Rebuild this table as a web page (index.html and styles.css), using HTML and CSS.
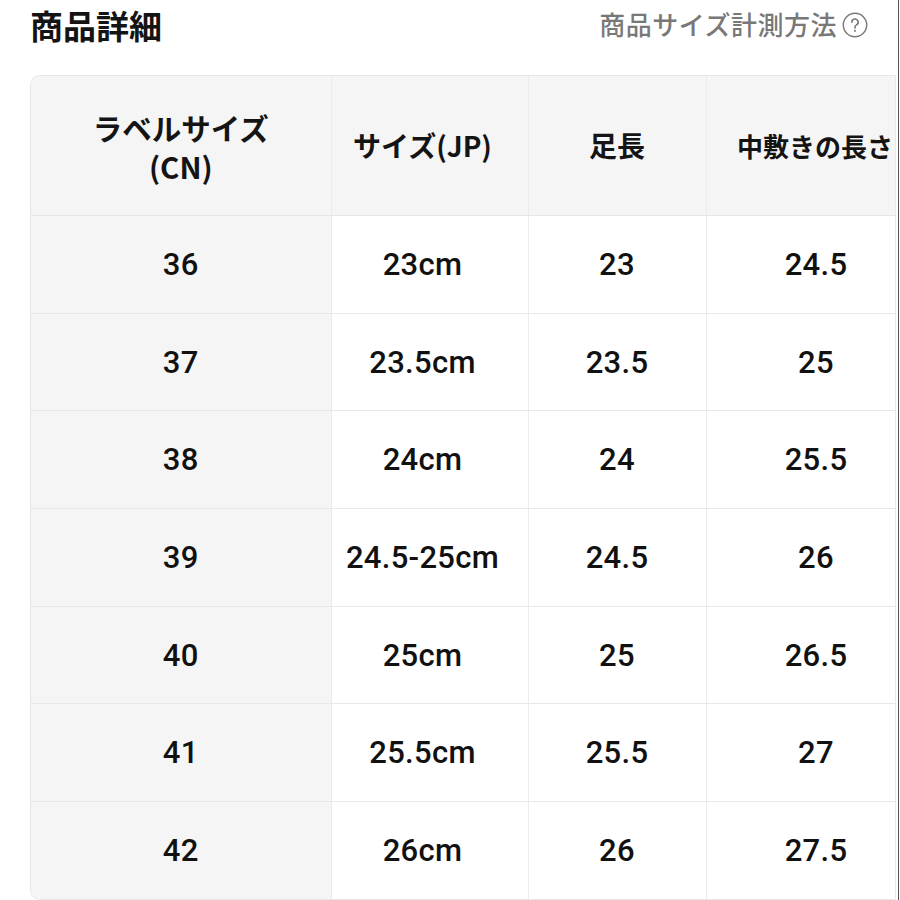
FILE: index.html
```html
<!DOCTYPE html>
<html lang="ja">
<head>
<meta charset="utf-8">
<title>商品詳細</title>
<link rel="stylesheet" href="styles.css">
</head>
<body>
<div class="page">
  <div class="head">
    <h1 class="title">商品詳細</h1>
    <div class="guide">
      <span class="guide-text">商品サイズ計測方法</span>
      <svg class="help" viewBox="0 0 24 24" width="26" height="26" aria-hidden="true">
        <circle cx="12" cy="12" r="10.8" fill="none" stroke="#777" stroke-width="1.3"/>
        <path d="M9.1 9.4a2.9 2.9 0 1 1 4.3 2.5c-.9.5-1.4 1.1-1.4 2v.9" fill="none" stroke="#777" stroke-width="1.5" stroke-linecap="round"/>
        <circle cx="12" cy="17.4" r="0.95" fill="#777"/>
      </svg>
    </div>
  </div>
  <div class="table-wrap">
    <table class="size-table">
      <colgroup>
        <col class="c1"><col class="c2"><col class="c3"><col class="c4">
      </colgroup>
      <thead>
        <tr>
          <th class="h-label">ラベルサイズ<br>(CN)</th>
          <th class="h-jp">サイズ(JP)</th>
          <th>足長</th>
          <th class="h-insole">中敷きの長さ</th>
        </tr>
      </thead>
      <tbody>
        <tr><td>36</td><td>23cm</td><td>23</td><td>24.5</td></tr>
        <tr><td>37</td><td>23.5cm</td><td>23.5</td><td>25</td></tr>
        <tr><td>38</td><td>24cm</td><td>24</td><td>25.5</td></tr>
        <tr><td>39</td><td>24.5-25cm</td><td>24.5</td><td>26</td></tr>
        <tr><td>40</td><td>25cm</td><td>25</td><td>26.5</td></tr>
        <tr><td>41</td><td>25.5cm</td><td>25.5</td><td>27</td></tr>
        <tr><td>42</td><td>26cm</td><td>26</td><td>27.5</td></tr>
      </tbody>
    </table>
  </div>
</div>
</body>
</html>
```
FILE: styles.css
```css
html, body {
  margin: 0;
  padding: 0;
  background: #fff;
}
body {
  font-family: Roboto, "Liberation Sans", "Noto Sans CJK JP", sans-serif;
  color: #141414;
  overflow: hidden;
}
.page {
  width: 899px;
  height: 900px;
  border-right: 1px solid #555;
  padding-left: 30px;
  box-sizing: border-box;
  overflow: hidden;
}
.head {
  height: 50px;
  display: flex;
  align-items: center;
  justify-content: space-between;
  padding-right: 30px;
}
.title {
  margin: 0;
  font-family: "Noto Sans CJK JP", sans-serif;
  font-size: 33px;
  font-weight: 700;
  line-height: 1;
  color: #141414;
}
.guide {
  display: flex;
  align-items: center;
  gap: 5px;
  color: #787878;
}
.guide-text {
  font-family: "Noto Sans CJK JP", sans-serif;
  font-size: 26px;
  font-weight: 500;
  letter-spacing: 0.5px;
  line-height: 1;
  margin-top: -3px;
}
.help {
  display: block;
}
.table-wrap {
  margin-top: 25px;
  width: 866px;
  height: 825px;
  border: 1px solid #e6e6e6;
  border-right-color: #e9e9e9;
  border-radius: 10px 0 0 10px;
  overflow: hidden;
  box-sizing: border-box;
}
.size-table {
  table-layout: fixed;
  border-collapse: collapse;
  width: 895px;
}
.c1 { width: 300px; }
.c2 { width: 197px; }
.c3 { width: 178px; }
.c4 { width: 220px; }
.size-table th {
  height: 137px;
  padding: 0;
  background: #f5f5f5;
  font-family: "Noto Sans CJK JP", sans-serif;
  font-size: 28px;
  font-weight: 700;
  line-height: 39px;
  color: #141414;
  text-align: center;
  vertical-align: middle;
  border-right: 1px solid #ebebeb;
  border-bottom: 1px solid #e6e6e6;
}
.size-table th.h-label {
  font-size: 29.5px;
  padding-top: 2px;
}
.size-table th.h-jp {
  padding-right: 14px;
}
.size-table th.h-insole {
  font-size: 26px;
  padding-right: 2px;
}
.size-table td {
  height: 96.7px;
  padding: 0;
  text-align: center;
  vertical-align: middle;
  font-size: 31px;
  font-weight: 500;
  letter-spacing: 0.3px;
  color: #111;
  border-right: 1px solid #ebebeb;
  border-bottom: 1px solid #e8e8e8;
  background: #fff;
}
.size-table td:first-child {
  background: #f5f5f5;
}
.size-table td:nth-child(2) {
  padding-right: 14px;
}
```
